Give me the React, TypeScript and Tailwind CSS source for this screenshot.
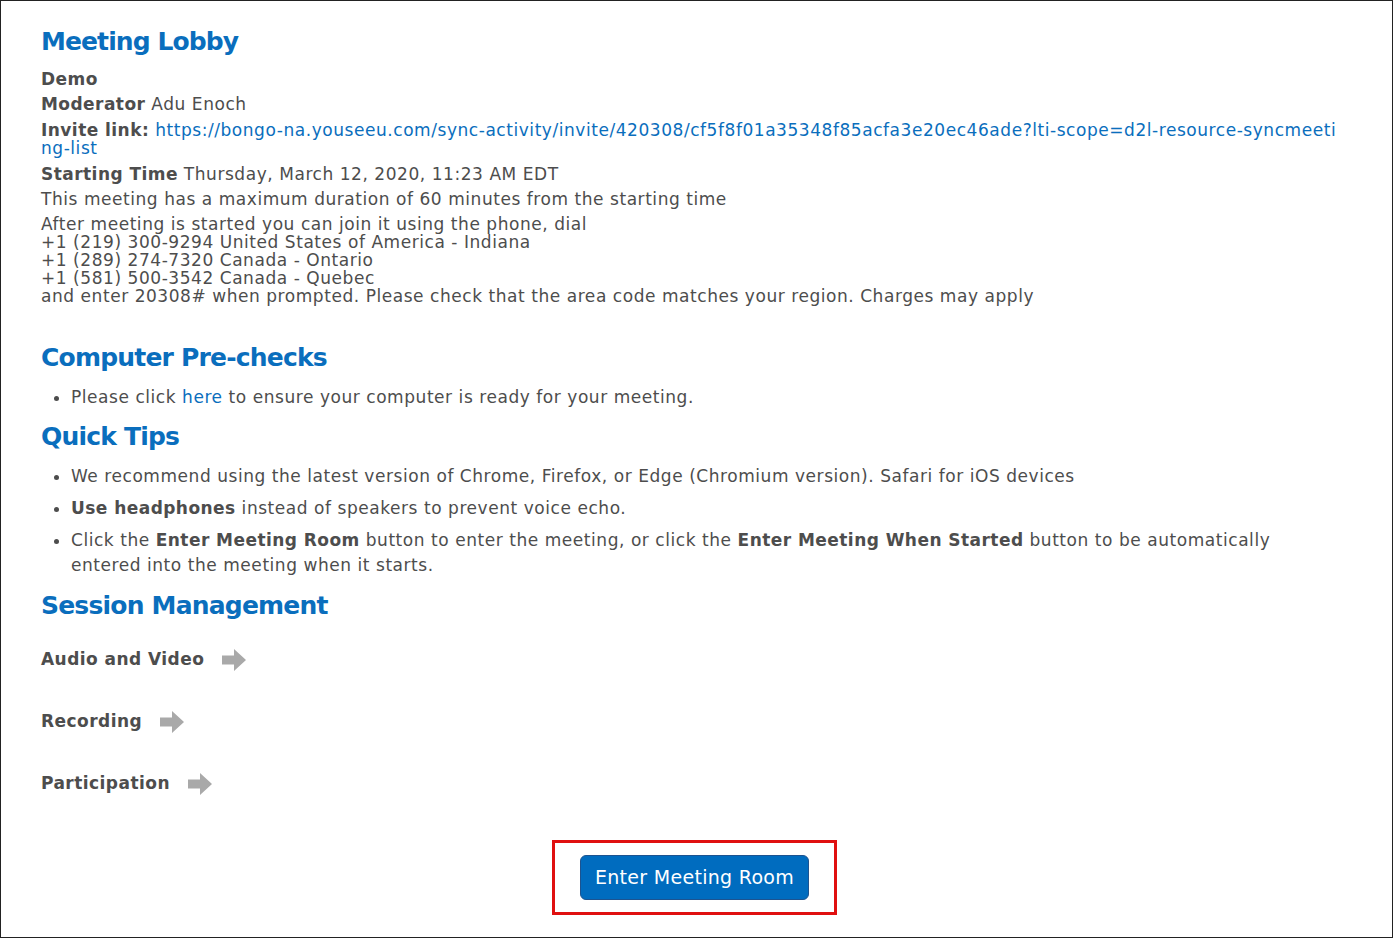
import React from 'react'

const Arrow: React.FC = () => (
  <svg width="24" height="22" viewBox="0 0 24 22" className="ml-[18px]">
    <path d="M0 6.5h12V0l12 11-12 11v-6.5H0z" fill="#a9a9a9" />
  </svg>
)

const App: React.FC = () => {
  return (
    <div className="h-[938px] w-full border border-[#222] bg-white font-['DejaVu_Sans',Verdana,sans-serif] text-[#4d4d4d] tracking-[0.55px]">
      <div className="pl-[40px] pr-[50px] pt-[24px]">
        <h1 className="text-[25px] font-bold leading-[34px] tracking-[-0.9px] text-[#0a6ebd]">Meeting Lobby</h1>

        <div className="mt-[8px] text-[17px] leading-[25px]">
          <div className="font-bold tracking-[0.45px]">Demo</div>
          <div><span className="font-bold tracking-[0.45px]">Moderator</span> Adu Enoch</div>
          <div className="leading-[18px] mt-[4px] break-all">
            <span className="font-bold tracking-[0.45px]">Invite link:</span>{' '}
            <a className="text-[#0a6ebd]">https://bongo-na.youseeu.com/sync-activity/invite/420308/cf5f8f01a35348f85acfa3e20ec46ade?lti-scope=d2l-resource-syncmeeting-list</a>
          </div>
          <div className="mt-[5px]"><span className="font-bold tracking-[0.45px]">Starting Time</span> Thursday, March 12, 2020, 11:23 AM EDT</div>
          <div>This meeting has a maximum duration of 60 minutes from the starting time</div>
          <div className="mt-[3px] leading-[18px]">
            <div>After meeting is started you can join it using the phone, dial</div>
            <div>+1 (219) 300-9294 United States of America - Indiana</div>
            <div>+1 (289) 274-7320 Canada - Ontario</div>
            <div>+1 (581) 500-3542 Canada - Quebec</div>
            <div>and enter 20308# when prompted. Please check that the area code matches your region. Charges may apply</div>
          </div>
        </div>

        <h2 className="mt-[36px] text-[25px] font-bold leading-[34px] tracking-[-0.8px] text-[#0a6ebd]">Computer Pre-checks</h2>
        <ul className="mt-[10px] list-disc pl-[30px] text-[17px] leading-[25px]">
          <li>Please click <a className="text-[#0a6ebd]">here</a> to ensure your computer is ready for your meeting.</li>
        </ul>

        <h2 className="mt-[10px] text-[25px] font-bold leading-[34px] tracking-[-0.8px] text-[#0a6ebd]">Quick Tips</h2>
        <ul className="mt-[10px] list-disc pl-[30px] text-[17px] leading-[25px] space-y-[7px]">
          <li>We recommend using the latest version of Chrome, Firefox, or Edge (Chromium version). Safari for iOS devices</li>
          <li><span className="font-bold tracking-[0.45px]">Use headphones</span> instead of speakers to prevent voice echo.</li>
          <li>
            Click the <span className="font-bold tracking-[0.45px]">Enter Meeting Room</span> button to enter the meeting, or click the{' '}
            <span className="font-bold tracking-[0.45px]">Enter Meeting When Started</span> button to be automatically
            <br />
            entered into the meeting when it starts.
          </li>
        </ul>

        <h2 className="mt-[11px] text-[25px] font-bold leading-[34px] tracking-[-0.8px] text-[#0a6ebd]">Session Management</h2>
        <div className="mt-[25px] flex flex-col gap-[38px] text-[17px] font-bold tracking-[0.45px]">
          <div className="flex items-center h-[24px]">Audio and Video<Arrow /></div>
          <div className="flex items-center h-[24px]">Recording<Arrow /></div>
          <div className="flex items-center h-[24px]">Participation<Arrow /></div>
        </div>

        <div className="mt-[44px] flex justify-center pl-[6px]">
          <div className="border-[3px] border-[#e01010] px-[25px] py-[12px]">
            <button className="h-[45px] rounded-[6px] border border-[#1d5390] bg-[#006cbf] px-[14px] text-[19px] tracking-[0.3px] text-white">
              Enter Meeting Room
            </button>
          </div>
        </div>
      </div>
    </div>
  )
}

export default App
